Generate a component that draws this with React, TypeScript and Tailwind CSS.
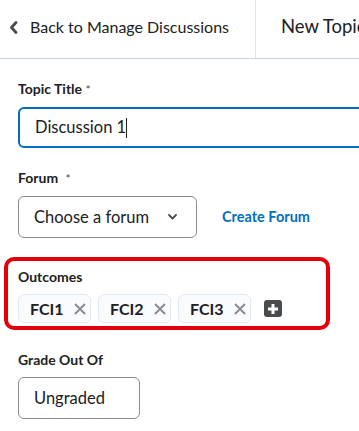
const outcomes = ["FCI1", "FCI2", "FCI3"];

export default function App() {
  return (
    <div className="w-[359px] h-[431px] overflow-hidden bg-white text-[#202122]" style={{ fontFamily: "Lato, 'Noto Sans', sans-serif" }}>
      <div className="flex h-[59px] border-b border-[#cdd5dc]">
        <div className="flex items-center w-[256px] shrink-0 border-r border-[#dfe4ea] pl-[9px] pb-[4px]">
          <svg width="9" height="13" viewBox="0 0 9 13" className="shrink-0">
            <path d="M7 1.5L2.5 6.5L7 11.5" fill="none" stroke="#494c4e" strokeWidth="2.8" strokeLinecap="round" strokeLinejoin="round" />
          </svg>
          <span className="ml-[12px] text-[16px] text-[#202122] whitespace-nowrap">Back to Manage Discussions</span>
        </div>
        <div className="flex items-center pl-[25px] pb-[4px] whitespace-nowrap overflow-hidden">
          <span className="text-[18.5px] text-[#202122]">New Topic</span>
        </div>
      </div>

      <div className="px-[18px]">
        <div className="mt-[21px] text-[14px] font-bold leading-[18px]">
          Topic Title <span className="text-[#494c4e] font-normal text-[12px]">*</span>
        </div>
        <div className="mt-[8px] -mr-[30px] h-[41px] border-2 border-[#006fbf] rounded-[6px] flex items-center pl-[15px] text-[16.5px] text-[#202122]">
          Discussion 1<span className="inline-block w-[1px] h-[20px] bg-[#202122]" />
        </div>

        <div className="mt-[21px] text-[14px] font-bold leading-[18px]">
          Forum <span className="ml-[4px] text-[#494c4e] font-normal text-[12px]">*</span>
        </div>
        <div className="mt-[8px] flex items-center">
          <div className="w-[179px] h-[42px] border border-[#868c8f] rounded-[6px] flex items-center justify-between pl-[15px] pr-[19px] text-[16.5px]">
            <span>Choose a forum</span>
            <svg width="9" height="6" viewBox="0 0 9 6">
              <path d="M1 1L4.5 4.5L8 1" fill="none" stroke="#494c4e" strokeWidth="1.8" strokeLinecap="round" strokeLinejoin="round" />
            </svg>
          </div>
          <span className="ml-[25px] text-[14.5px] font-bold text-[#006fbf]">Create Forum</span>
        </div>
      </div>

      <div className="mt-[19px] ml-[4px] w-[326px] h-[73px] border-[4px] border-[#e3000b] rounded-[10px] pl-[10px] pt-[7px]">
        <div className="text-[14px] font-bold leading-[18px]">Outcomes</div>
        <div className="mt-[8px] flex items-center gap-[7px]">
          {outcomes.map(o => (
            <div key={o} className="h-[29px] w-[73px] flex items-center pl-[11px] gap-[10px] rounded-[6px] border border-[#e3e9f1] bg-[#f9fbff] text-[16px] font-bold">
              <span>{o}</span>
              <svg width="12" height="12" viewBox="0 0 12 12">
                <path d="M1 1L11 11M11 1L1 11" fill="none" stroke="#868c8f" strokeWidth="2" />
              </svg>
            </div>
          ))}
          <div className="ml-[6px] w-[18px] h-[17px] rounded-[3px] bg-[#494c4e] flex items-center justify-center">
            <svg width="12" height="12" viewBox="0 0 12 12">
              <path d="M4.5 1h3v3.5H11v3H7.5V11h-3V7.5H1v-3h3.5z" fill="white" />
            </svg>
          </div>
        </div>
      </div>

      <div className="px-[18px]">
        <div className="mt-[21px] text-[14px] font-bold leading-[18px]">Grade Out Of</div>
        <div className="mt-[8px] w-[122px] h-[42px] border border-[#868c8f] rounded-[6px] flex items-center pl-[15px] text-[16.5px]">
          Ungraded
        </div>
      </div>
    </div>
  );
}
